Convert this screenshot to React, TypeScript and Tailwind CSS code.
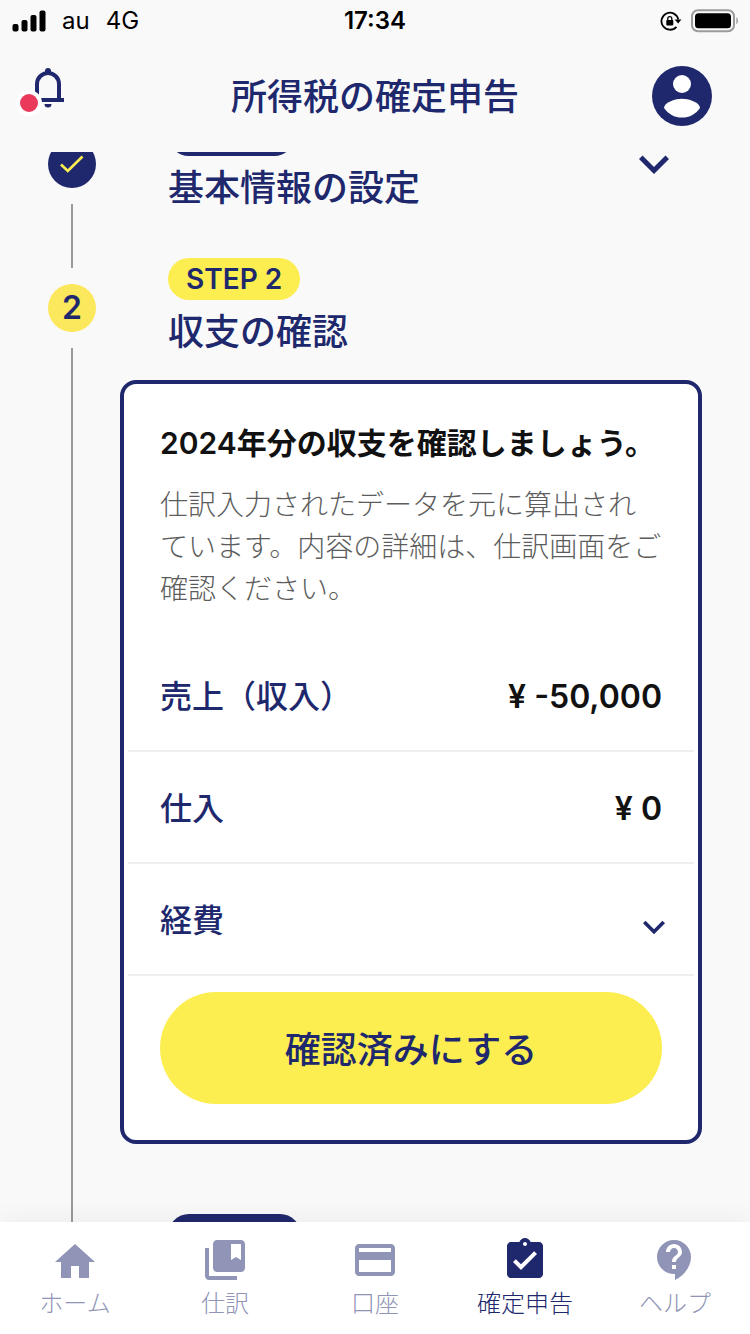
import { useState } from 'react';
import type { ReactNode } from 'react';
import {
  MdAssignmentTurnedIn,
  MdCollectionsBookmark,
  MdContactSupport,
  MdCreditCard,
  MdExpandMore,
} from 'react-icons/md';

interface Amount {
  label: string;
  value: number;
}

interface Tab {
  id: string;
  label: string;
  icon: ReactNode;
}

const amounts: Amount[] = [
  { label: '売上（収入）', value: -50000 },
  { label: '仕入', value: 0 },
];

const tabs: Tab[] = [
  { id: 'home', label: 'ホーム', icon: <HomeIcon /> },
  { id: 'journal', label: '仕訳', icon: <MdCollectionsBookmark className="size-12" /> },
  { id: 'account', label: '口座', icon: <MdCreditCard className="size-12" /> },
  { id: 'tax', label: '確定申告', icon: <MdAssignmentTurnedIn className="size-12" /> },
  { id: 'help', label: 'ヘルプ', icon: <MdContactSupport className="size-12" /> },
];

function HomeIcon() {
  return (
    <svg viewBox="0 -1 24 24" className="size-12" fill="currentColor" aria-hidden="true">
      <path d="M10 20v-6h4v6h5v-8h3L12 3 2 12h3v8z" />
    </svg>
  );
}

function SignalIcon() {
  return (
    <svg viewBox="0 0 34 22" className="h-[22px] w-[34px]" aria-hidden="true">
      <rect x="0.5" y="14" width="6" height="7.5" rx="2" />
      <rect x="9.5" y="10" width="6" height="11.5" rx="2" />
      <rect x="18.5" y="5" width="6" height="16.5" rx="2" />
      <rect x="27.5" y="0.5" width="6" height="21" rx="2" />
    </svg>
  );
}

function RotationLockIcon() {
  return (
    <svg viewBox="0 0 22 20" className="h-5 w-[22px]" aria-hidden="true">
      <path d="M16.4 15.8A8.5 8.5 0 1 1 18.3 8.5" fill="none" stroke="black" strokeWidth="1.8" />
      <path d="M14.6 8.6h6.8l-3.2 4z" />
      <rect x="6.3" y="9" width="7" height="5.4" rx="0.8" />
      <path d="M7.8 9.4V7.6a2 2 0 0 1 4 0v1.8" fill="none" stroke="black" strokeWidth="1.3" />
    </svg>
  );
}

function BatteryIcon() {
  return (
    <svg viewBox="0 0 48 24" className="h-6 w-12" aria-hidden="true">
      <rect x="2" y="1.2" width="42" height="21" rx="6" fill="none" stroke="#9b9b9b" strokeWidth="2" />
      <rect x="5" y="4.2" width="36" height="15" rx="3.5" />
      <path d="M46.4 8c2 1.5 2 6 0 7.5z" fill="#9b9b9b" />
    </svg>
  );
}

function BellIcon() {
  return (
    <svg viewBox="0 0 40 44" className="h-11 w-10" fill="#20286d" aria-hidden="true">
      <path d="M9 34V18a11 11 0 0 1 22 0v16" fill="none" stroke="#20286d" strokeWidth="4" />
      <path d="M17 8V5a3 3 0 0 1 6 0v3z" />
      <path d="M3 32h33v4H3z" />
      <path d="M16.5 38h7a3.5 3.5 0 0 1-7 0z" />
    </svg>
  );
}

function AccountIcon() {
  return (
    <svg viewBox="2 2 20 20" className="size-[60px]" aria-hidden="true">
      <circle cx="12" cy="12" r="10" fill="#20286d" />
      <circle cx="12" cy="8" r="3" fill="white" />
      <path
        d="M12 19.2c-2.5 0-4.71-1.28-6-3.22.03-1.99 4-3.08 6-3.08s5.97 1.09 6 3.08c-1.29 1.94-3.5 3.22-6 3.22z"
        fill="white"
      />
    </svg>
  );
}

function StatusBar() {
  return (
    <div className="grid h-10 grid-cols-[1fr_auto_1fr] items-center px-3 pt-[2px] text-2xl text-black">
      <div className="flex items-center gap-4">
        <SignalIcon />
        <span>au</span>
        <span>4G</span>
      </div>
      <span className="font-semibold">17:34</span>
      <div className="flex items-center justify-end gap-2">
        <RotationLockIcon />
        <BatteryIcon />
      </div>
    </div>
  );
}

function Header() {
  return (
    <header className="grid h-28 grid-cols-[1fr_auto_1fr] items-center px-7">
      <button type="button" aria-label="お知らせ" className="relative mb-4 w-10">
        <BellIcon />
        <span className="absolute top-6 -left-3 size-[26px] rounded-full border-4 border-white bg-[#ea3a5b]" />
      </button>
      <h1 className="pt-[2px] text-4xl font-medium">所得税の確定申告</h1>
      <button type="button" aria-label="アカウント" className="mr-[10px] justify-self-end">
        <AccountIcon />
      </button>
    </header>
  );
}

interface StepProps {
  marker: ReactNode;
  children: ReactNode;
}

function Step({ marker, children }: StepProps) {
  return (
    <li className="flex gap-6">
      <div className="flex w-12 shrink-0 flex-col items-center gap-4 pt-4">
        {marker}
        <span className="w-[2px] flex-1 bg-[#999]" />
      </div>
      <div className="-mt-[10px] min-w-0 flex-1">{children}</div>
    </li>
  );
}

function StepBadge({ label, active }: { label: string; active?: boolean }) {
  return (
    <span
      className={`block w-fit rounded-full px-[18px] text-[28px] leading-[42px] font-semibold ${
        active ? 'bg-[#fcee50]' : 'bg-[#20286d] text-white'
      }`}
    >
      {label}
    </span>
  );
}

function formatYen(value: number) {
  return `¥ ${value.toLocaleString('en-US')}`;
}

function IncomeCard() {
  const [expanded, setExpanded] = useState(false);
  const [confirmed, setConfirmed] = useState(false);

  return (
    <section className="mt-[22px] rounded-2xl border-4 border-[#20286d] bg-white px-1 pt-9 pb-9">
      <div className="px-8 pb-[30px]">
        <h3 className="text-[30px] leading-[46px] font-semibold whitespace-nowrap text-[#111]">
          2024年分の収支を確認しましょう。
        </h3>
        <p className="mt-[18px] text-[28px] leading-[42px] font-light whitespace-nowrap text-[#5c5c5c]">
          仕訳入力されたデータを元に算出され
          <br />
          ています。内容の詳細は、仕訳画面をご
          <br />
          確認ください。
        </p>
      </div>
      <dl>
        {amounts.map((item) => (
          <div
            key={item.label}
            className="flex h-28 items-center justify-between border-b-2 border-[#eee] px-8 pt-1 text-[32px]"
          >
            <dt className="font-medium">{item.label}</dt>
            <dd className="font-semibold text-[#111]">{formatYen(item.value)}</dd>
          </div>
        ))}
      </dl>
      <button
        type="button"
        aria-expanded={expanded}
        onClick={() => setExpanded(!expanded)}
        className="flex h-28 w-full items-center justify-between border-b-2 border-[#eee] pt-1 pr-[18px] pl-8 text-[32px] font-medium"
      >
        経費
        <MdExpandMore className="mt-3 size-11" />
      </button>
      <div className="px-8 pt-4">
        <button
          type="button"
          aria-pressed={confirmed}
          onClick={() => setConfirmed(!confirmed)}
          className="h-28 w-full rounded-full bg-[#fcee50] pt-1 text-4xl font-medium"
        >
          確認済みにする
        </button>
      </div>
    </section>
  );
}

function TabBar() {
  const [current, setCurrent] = useState('tax');

  return (
    <nav className="z-10 grid h-28 shrink-0 grid-cols-5 bg-white shadow-[0_-4px_24px_rgba(0,0,0,0.05)]">
      {tabs.map((tab) => (
        <button
          key={tab.id}
          type="button"
          onClick={() => setCurrent(tab.id)}
          className={`flex flex-col items-center pt-[14px] text-2xl font-light ${
            current === tab.id ? 'text-[#20286d]' : 'text-[#9094b6]'
          }`}
        >
          {tab.icon}
          <span className="mt-1">{tab.label}</span>
        </button>
      ))}
    </nav>
  );
}

export default function App() {
  return (
    <div className="flex h-screen flex-col bg-[#f9f9f9] font-[Inter,'Noto_Sans_CJK_JP',sans-serif] text-[#20286d]">
      <StatusBar />
      <Header />
      <main className="min-h-0 flex-1 overflow-hidden">
        {/* scrolled a little past the first badge */}
        <ol className="-mt-7 px-12">
          <Step
            marker={
              <span className="flex size-12 items-center justify-center rounded-full bg-[#20286d]">
                <svg viewBox="0 0 24 18" className="h-[18px] w-6" aria-label="完了">
                  <path d="M1 9.5l6.8 6.5L22.5 1.5" fill="none" stroke="#fcee50" strokeWidth="2.6" />
                </svg>
              </span>
            }
          >
            <button type="button" className="flex w-full items-start justify-between pr-[18px] pb-[54px] pl-12 text-left">
              <span className="flex flex-col gap-[6px]">
                <StepBadge label="STEP 1" />
                <span className="text-4xl leading-[52px] font-medium">基本情報の設定</span>
              </span>
              <MdExpandMore className="mt-5 size-[60px]" />
            </button>
          </Step>
          <Step
            marker={
              <span className="flex size-12 items-center justify-center rounded-full bg-[#fce85c] text-[32px] font-semibold">
                2
              </span>
            }
          >
            <div className="flex flex-col gap-[6px] pl-12">
              <StepBadge label="STEP 2" active />
              <h2 className="text-4xl leading-[52px] font-medium">収支の確認</h2>
            </div>
            <IncomeCard />
            <div className="h-20" />
          </Step>
          <Step marker={<span className="size-12 rounded-full bg-[#20286d]" />}>
            <div className="pl-12">
              <StepBadge label="STEP 3" />
            </div>
          </Step>
        </ol>
      </main>
      <TabBar />
    </div>
  );
}
